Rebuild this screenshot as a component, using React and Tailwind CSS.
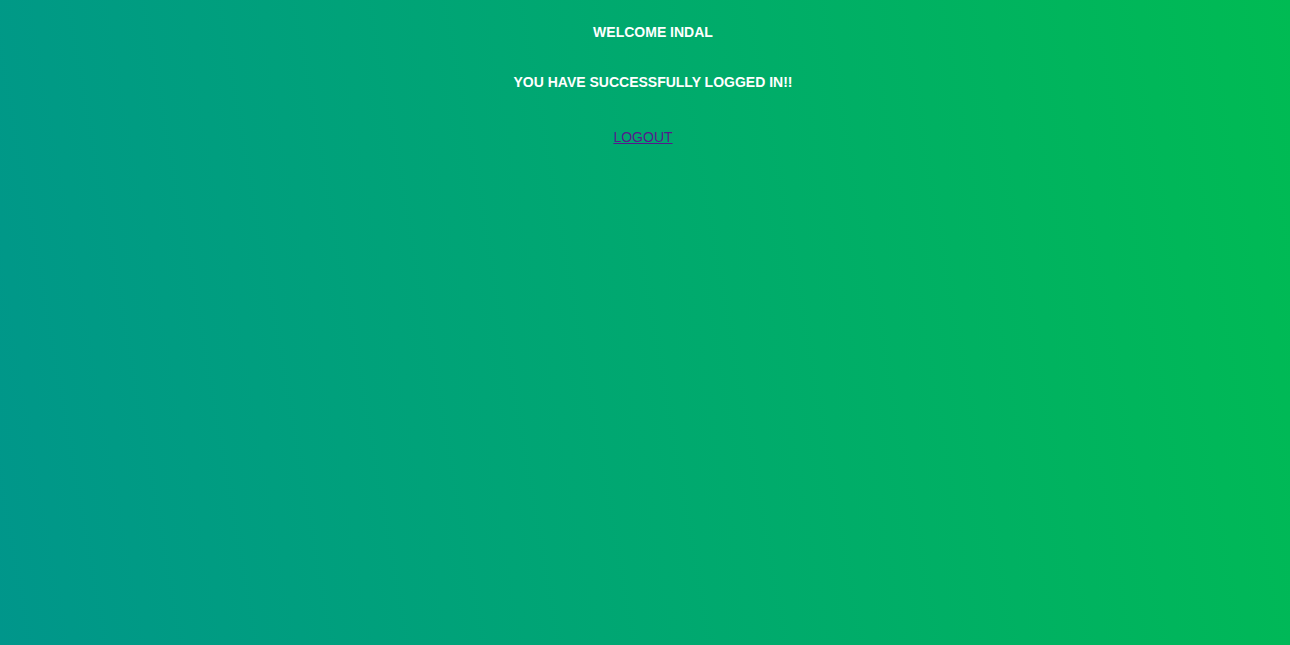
const App = () => {
  return (
    <div
      className="min-h-screen w-full bg-linear-[80deg] from-[#00968b] to-[#00bb53] flex flex-col items-center text-[14px] leading-[16px]"
      style={{ fontFamily: '"Liberation Sans", Arial, sans-serif' }}
    >
      <h4 className="mt-[24px] pl-[16px] font-bold text-white">WELCOME INDAL</h4>
      <h4 className="mt-[34px] pl-[16px] font-bold text-white">
        YOU HAVE SUCCESSFULLY LOGGED IN!!
      </h4>
      <a href="#" className="mt-[39px] mr-[4px] text-[#551a8b] underline">
        LOGOUT
      </a>
    </div>
  );
};

export default App;
